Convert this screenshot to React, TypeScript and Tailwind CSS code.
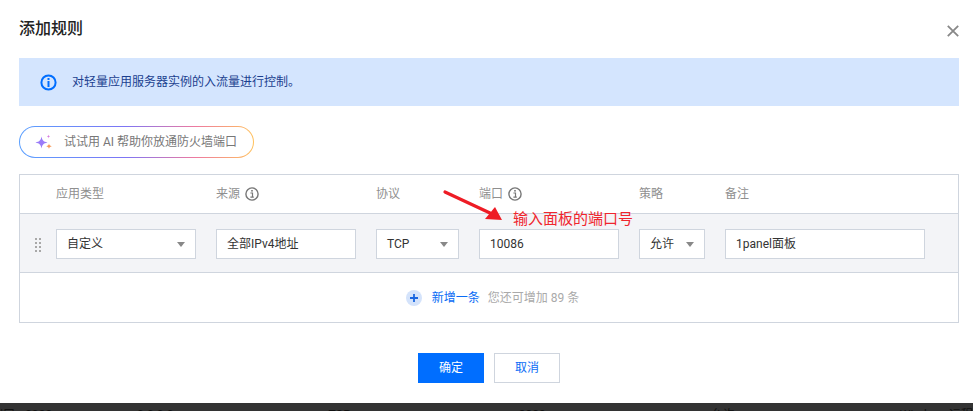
const font = { fontFamily: '"Roboto","Noto Sans CJK SC",sans-serif' };

function Info({ className = "" }: { className?: string }) {
  return (
    <svg width="14" height="14" viewBox="0 0 14 14" fill="none" className={className}>
      <circle cx="7" cy="7" r="6.1" stroke="#777" strokeWidth="1.4" />
      <rect x="6.2" y="3" width="1.6" height="1.6" fill="#777" />
      <path d="M5.4 6h2.1v3.8M5.4 10.200h3.4" stroke="#777" strokeWidth="1.2" />
    </svg>
  );
}

function Caret() {
  return (
    <svg width="8" height="5" viewBox="0 0 8 5" className="shrink-0">
      <path d="M0 0h8L4 5z" fill="#888" />
    </svg>
  );
}

function Field({ w, children, caret }: { w: string; children: React.ReactNode; caret?: boolean }) {
  return (
    <div className={`${w} h-[30px] shrink-0 bg-white border border-[#cfd5de] flex items-center justify-between pl-[10px] pr-[10px] text-[12px] text-[#333]`}>
      <span>{children}</span>
      {caret && <Caret />}
    </div>
  );
}

function Head({ w, children, info }: { w: string; children: React.ReactNode; info?: boolean }) {
  return (
    <div className={`${w} shrink-0 flex items-center gap-[5px] text-[12px] text-[#8f8f8f]`}>
      <span>{children}</span>
      {info && <Info />}
    </div>
  );
}

export default function App() {
  return (
    <div style={font} className="relative h-[411px] w-[973px] overflow-hidden bg-white flex flex-col">
      <div className="h-[403px] shrink-0 px-[19px] pr-[14px] flex flex-col">
        <div className="h-[58px] shrink-0 flex items-center justify-between">
          <h1 className="text-[16px] font-medium text-[#222] -mt-[1px]">添加规则</h1>
          <svg width="12" height="12" viewBox="0 0 12 12" className="mt-[4px]">
            <path d="M0.8 0.8l10.4 10.4M11.2 0.8L0.8 11.2" stroke="#888" strokeWidth="1.8" />
          </svg>
        </div>

        <div className="h-[48px] w-[940px] shrink-0 bg-[#d4e5fe] flex items-center pl-[21px] gap-[15px] text-[12px] text-[#1b3f8f]">
          <svg width="17" height="17" viewBox="0 0 17 17" fill="none" className="shrink-0">
            <circle cx="8.500" cy="8.500" r="7.100" stroke="#006eff" strokeWidth="2" />
            <rect x="7.500" y="4" width="2" height="2" fill="#006eff" />
            <rect x="7.500" y="7" width="2" height="6" fill="#006eff" />
          </svg>
          <span>对轻量应用服务器实例的入流量进行控制。</span>
        </div>

        <div className="mt-[20px] h-[32px] w-[235px] shrink-0 rounded-full p-px bg-[linear-gradient(90deg,#5aa0ff,#7d75f5_45%,#ee7aa0_75%,#ffc25e)]">
          <div className="h-full w-full rounded-full bg-white flex items-center pl-[15px] gap-[11px] text-[12px] text-[#777]">
            <svg width="18" height="18" viewBox="0 0 18 18" className="shrink-0">
              <path d="M6.500 3.500 C7.300 7.300 8.200 8.500 12.500 9.500 C8.200 10.500 7.300 11.700 6.500 15.500 C5.700 11.700 4.800 10.500 0.500 9.500 C4.800 8.500 5.700 7.300 6.500 3.500z" fill="#9a7cf8" />
              <path d="M14 10.500 C14.300 12.200 14.800 12.700 16.800 13.200 C14.800 13.700 14.300 14.200 14 16 C13.700 14.200 13.200 13.700 11.200 13.200 C13.200 12.700 13.700 12.200 14 10.500z" fill="#f79a5c" />
              <path d="M13.500 1.500 C13.600 2.800 14 3.200 15.200 3.500 C14 3.800 13.600 4.200 13.500 5.500 C13.400 4.200 13 3.800 11.800 3.500 C13 3.200 13.400 2.800 13.500 1.500z" fill="#d77be0" />
            </svg>
            <span>试试用 AI 帮助你放通防火墙端口</span>
          </div>
        </div>

        <div className="mt-[16px] w-[940px] h-[149px] shrink-0 border border-[#cfd5de] flex flex-col">
          <div className="h-[39px] shrink-0 pl-[36px] flex items-center gap-[20px] border-b border-[#cfd5de]">
            <Head w="w-[140px]">应用类型</Head>
            <Head w="w-[140px]" info>来源</Head>
            <Head w="w-[83px]">协议</Head>
            <Head w="w-[140px]" info>端口</Head>
            <Head w="w-[66px]">策略</Head>
            <Head w="w-[200px]">备注</Head>
          </div>
          <div className="h-[59px] shrink-0 pt-[2px] bg-[#f3f4f7] border-b border-[#cfd5de] flex items-center">
            <div className="w-[36px] shrink-0 pl-[15px] pt-[2px]">
              <div className="grid grid-cols-[2px_2px] gap-x-[2px] gap-y-[2px]">
                {[0, 1, 2, 3, 4, 5, 6, 7].map((i) => (
                  <span key={i} className="w-[2px] h-[2px] bg-[#a8a8a8]" />
                ))}
              </div>
            </div>
            <div className="flex items-center gap-[20px]">
              <Field w="w-[140px]" caret>自定义</Field>
              <Field w="w-[140px]">全部IPv4地址</Field>
              <Field w="w-[83px]" caret>TCP</Field>
              <Field w="w-[140px]">10086</Field>
              <Field w="w-[66px]" caret>允许</Field>
              <Field w="w-[200px]">1panel面板</Field>
            </div>
          </div>
          <div className="flex-1 flex items-center justify-center text-[12px] pt-[1px] pl-[7px]">
            <span className="w-[16px] h-[16px] rounded-full bg-[#d4e3fb] flex items-center justify-center mr-[10px]">
              <svg width="8" height="8" viewBox="0 0 8 8">
                <path d="M4 0v8M0 4h8" stroke="#1a66e0" strokeWidth="1.8" />
              </svg>
            </span>
            <span className="text-[#0a6cf5]">新增一条</span>
            <span className="ml-[8px] text-[#aaa]">您还可增加 89 条</span>
          </div>
        </div>

        <div className="mt-[30px] w-[940px] flex justify-center gap-[10px] text-[12px]">
          <button className="w-[66px] h-[30px] bg-[#006eff] text-white">确定</button>
          <button className="w-[66px] h-[30px] bg-white border border-[#cfd5de] text-[#0a6cf5]">取消</button>
        </div>
      </div>

      <div className="h-[8px] shrink-0 overflow-hidden bg-[#333] text-[12px] leading-[18px] text-[#111] flex whitespace-nowrap pt-[3px]">
        <span className="-ml-[9px]">端口</span>
        <span className="ml-[10px]">2022</span>
        <span className="ml-[85px]">0.0.0.0</span>
        <span className="ml-[155px]">TCP</span>
        <span className="ml-[168px]">3389</span>
        <span className="ml-[165px]">允许</span>
        <span className="ml-[165px]">Windows</span>
        <span className="ml-[0px]">远程</span>
      </div>

      <svg width="70" height="40" viewBox="0 0 70 40" className="absolute left-[438px] top-[184px]">
        <path d="M7 8 L52 29" stroke="#ee1c25" strokeWidth="3.200" strokeLinecap="round" />
        <path d="M64 36 L47 35 L57 23 z" fill="#ee1c25" />
      </svg>
      <div className="absolute left-[513px] top-[209px] text-[15px] leading-[20px] text-[#f0262e] whitespace-nowrap">
        输入面板的端口号
      </div>
    </div>
  );
}
